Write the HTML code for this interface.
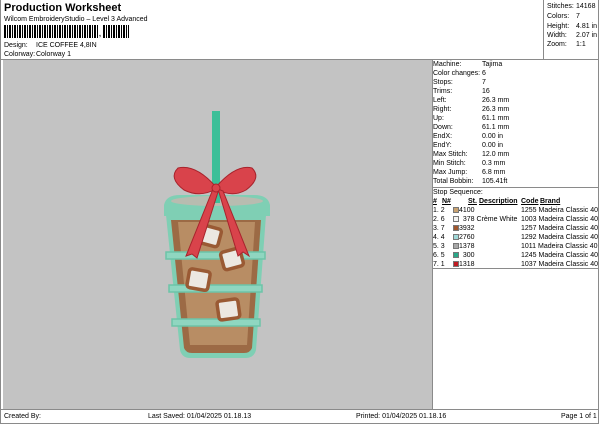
<!DOCTYPE html>
<html><head><meta charset="utf-8"><style>
*{margin:0;padding:0;box-sizing:border-box}
body{width:600px;height:424px;background:#fff;position:relative;overflow:hidden;font-family:"Liberation Sans",Arial,sans-serif;font-size:7px;color:#000}
.a{position:absolute;white-space:nowrap;line-height:9px}
.l{position:absolute;background:#8a8a8a}
.sw{display:inline-block;width:6px;height:6px;border:1px solid #777;vertical-align:-1px}
</style></head><body>
<div class="a" style="left:4px;top:2px;font-size:11px;font-weight:bold;line-height:13px">Production Worksheet</div>
<div class="a" style="left:4px;top:15px">Wilcom EmbroideryStudio – Level 3 Advanced</div>
<div style="position:absolute;left:4px;top:25px;width:95px;height:13px;background:repeating-linear-gradient(90deg,#000 0 2px,#fff 2px 3px,#000 3px 4px,#fff 4px 5px)"></div>
<div class="a" style="left:99px;top:30px;font-weight:bold">,</div>
<div style="position:absolute;left:103px;top:25px;width:26px;height:13px;background:repeating-linear-gradient(90deg,#000 0 2px,#fff 2px 3px,#000 3px 4px,#fff 4px 5px)"></div>
<div class="a" style="left:4px;top:41px">Design:</div><div class="a" style="left:36px;top:41px">ICE COFFEE 4,8IN</div>
<div class="a" style="left:4px;top:50px">Colorway:</div><div class="a" style="left:36px;top:50px">Colorway 1</div>
<div class="l" style="left:0;top:0;width:1px;height:424px"></div>
<div class="l" style="left:598px;top:0;width:1px;height:424px"></div>
<div class="l" style="left:0;top:59px;width:599px;height:1px"></div>
<div class="l" style="left:543px;top:0;width:1px;height:59px"></div>
<div style="position:absolute;left:3px;top:60px;width:429px;height:349px;background:#c3c3c3"></div>
<div class="l" style="left:432px;top:59px;width:1px;height:350px"></div>
<div class="l" style="left:0;top:409px;width:599px;height:1px"></div>
<div class="l" style="left:432px;top:187px;width:167px;height:1px"></div>
<div class="l" style="left:432px;top:268px;width:167px;height:1px"></div>
<div class="l" style="left:0;top:423px;width:599px;height:1px"></div>

<div class="a" style="left:547px;top:2px">Stitches:</div><div class="a" style="left:576px;top:2px">14168</div>
<div class="a" style="left:547px;top:12px">Colors:</div><div class="a" style="left:576px;top:12px">7</div>
<div class="a" style="left:547px;top:22px">Height:</div><div class="a" style="left:576px;top:22px">4.81 in</div>
<div class="a" style="left:547px;top:31px">Width:</div><div class="a" style="left:576px;top:31px">2.07 in</div>
<div class="a" style="left:547px;top:40px">Zoom:</div><div class="a" style="left:576px;top:40px">1:1</div>

<div style="position:absolute;left:433px;top:60px">
<div class="a" style="top:0">Machine:</div><div class="a" style="left:49px;top:0">Tajima</div>
<div class="a" style="top:9px">Color changes:</div><div class="a" style="left:49px;top:9px">6</div>
<div class="a" style="top:18px">Stops:</div><div class="a" style="left:49px;top:18px">7</div>
<div class="a" style="top:27px">Trims:</div><div class="a" style="left:49px;top:27px">16</div>
<div class="a" style="top:36px">Left:</div><div class="a" style="left:49px;top:36px">26.3 mm</div>
<div class="a" style="top:45px">Right:</div><div class="a" style="left:49px;top:45px">26.3 mm</div>
<div class="a" style="top:54px">Up:</div><div class="a" style="left:49px;top:54px">61.1 mm</div>
<div class="a" style="top:63px">Down:</div><div class="a" style="left:49px;top:63px">61.1 mm</div>
<div class="a" style="top:72px">EndX:</div><div class="a" style="left:49px;top:72px">0.00 in</div>
<div class="a" style="top:81px">EndY:</div><div class="a" style="left:49px;top:81px">0.00 in</div>
<div class="a" style="top:90px">Max Stitch:</div><div class="a" style="left:49px;top:90px">12.0 mm</div>
<div class="a" style="top:99px">Min Stitch:</div><div class="a" style="left:49px;top:99px">0.3 mm</div>
<div class="a" style="top:108px">Max Jump:</div><div class="a" style="left:49px;top:108px">6.8 mm</div>
<div class="a" style="top:117px">Total Bobbin:</div><div class="a" style="left:49px;top:117px">105.41ft</div>
<div class="a" style="top:128px">Stop Sequence:</div>
<div class="a" style="top:137px;font-weight:bold;text-decoration:underline">#</div>
<div class="a" style="left:9px;top:137px;font-weight:bold;text-decoration:underline">N#</div>
<div class="a" style="left:35px;top:137px;font-weight:bold;text-decoration:underline">St.</div>
<div class="a" style="left:46px;top:137px;font-weight:bold;text-decoration:underline">Description</div>
<div class="a" style="left:88px;top:137px;font-weight:bold;text-decoration:underline">Code</div>
<div class="a" style="left:107px;top:137px;font-weight:bold;text-decoration:underline">Brand</div>
</div>
<div style="position:absolute;left:433px;top:206px">
<div class="a" style="top:0">1. 2</div><div class="a" style="left:20px;top:0"><span class="sw" style="background:#c9a26f"></span>4100</div><div class="a" style="left:88px;top:0">1255 Madeira Classic 40</div>
<div class="a" style="top:9px">2. 6</div><div class="a" style="left:20px;top:9px"><span class="sw" style="background:#f4f4f2"></span>&nbsp;&nbsp;378 Crème White</div><div class="a" style="left:88px;top:9px">1003 Madeira Classic 40</div>
<div class="a" style="top:18px">3. 7</div><div class="a" style="left:20px;top:18px"><span class="sw" style="background:#a0562c"></span>3932</div><div class="a" style="left:88px;top:18px">1257 Madeira Classic 40</div>
<div class="a" style="top:27px">4. 4</div><div class="a" style="left:20px;top:27px"><span class="sw" style="background:#9fd8d8"></span>2760</div><div class="a" style="left:88px;top:27px">1292 Madeira Classic 40</div>
<div class="a" style="top:36px">5. 3</div><div class="a" style="left:20px;top:36px"><span class="sw" style="background:#a8a8a8"></span>1378</div><div class="a" style="left:88px;top:36px">1011 Madeira Classic 40</div>
<div class="a" style="top:45px">6. 5</div><div class="a" style="left:20px;top:45px"><span class="sw" style="background:#2aa888"></span>&nbsp;&nbsp;300</div><div class="a" style="left:88px;top:45px">1245 Madeira Classic 40</div>
<div class="a" style="top:54px">7. 1</div><div class="a" style="left:20px;top:54px"><span class="sw" style="background:#c01a22"></span>1318</div><div class="a" style="left:88px;top:54px">1037 Madeira Classic 40</div>
</div>

<div class="a" style="left:4px;top:412px">Created By:</div>
<div class="a" style="left:148px;top:412px">Last Saved: 01/04/2025 01.18.13</div>
<div class="a" style="left:356px;top:412px">Printed: 01/04/2025 01.18.16</div>
<div class="a" style="left:561px;top:412px">Page 1 of 1</div>

<svg style="position:absolute;left:0;top:0" width="600" height="424">
<rect x="212" y="111" width="8" height="95" fill="#3cbf98"/>
<path d="M166 215 L266 215 L256 350 Q254 358 246 358 L190 358 Q182 358 180 350 Z" fill="#7fcfb4"/>
<path d="M171 220 L261 220 L252 348 Q250 353 244 353 L192 353 Q186 353 184 348 Z" fill="#9c6a45"/>
<path d="M178 222 L255 222 L247 345 L190 345 Z" fill="#b88d64"/>
<g fill="#8fd6c0" stroke="#6cc4a8" stroke-width="1.5">
<rect x="166" y="252" width="99" height="7"/>
<rect x="169" y="285" width="93" height="7"/>
<rect x="172" y="319" width="88" height="7"/>
</g>
<g fill="#ece8e2" stroke="#9a5a34" stroke-width="3.5">
<rect x="200" y="227" width="20" height="18" rx="3" transform="rotate(15 210 236)"/>
<rect x="222" y="250" width="20" height="18" rx="3" transform="rotate(-15 232 259)"/>
<rect x="188" y="270" width="21" height="19" rx="3" transform="rotate(10 198 280)"/>
<rect x="218" y="300" width="21" height="19" rx="3" transform="rotate(-8 228 310)"/>
</g>
<path d="M164 205 Q166 195 180 195 L254 195 Q268 195 270 205 L270 216 L164 216 Z" fill="#7fcfb4"/>
<ellipse cx="217" cy="201" rx="46" ry="5" fill="#b8bcb0"/>
<rect x="212" y="193" width="8" height="10" fill="#3cbf98"/>
<g fill="#d9434b" stroke="#a8232c" stroke-width="1">
<path d="M216 187 Q196 164 178 168 Q168 178 184 190 Q200 198 216 189 Z"/>
<path d="M216 187 Q236 164 252 168 Q262 178 246 190 Q232 198 216 189 Z"/>
<path d="M213 189 L186 256 L192 254 L197 258 L218 192 Z"/>
<path d="M218 189 L238 256 L243 252 L249 256 L223 191 Z"/>
<circle cx="216" cy="188" r="4"/>
</g>
</svg>
</body></html>
